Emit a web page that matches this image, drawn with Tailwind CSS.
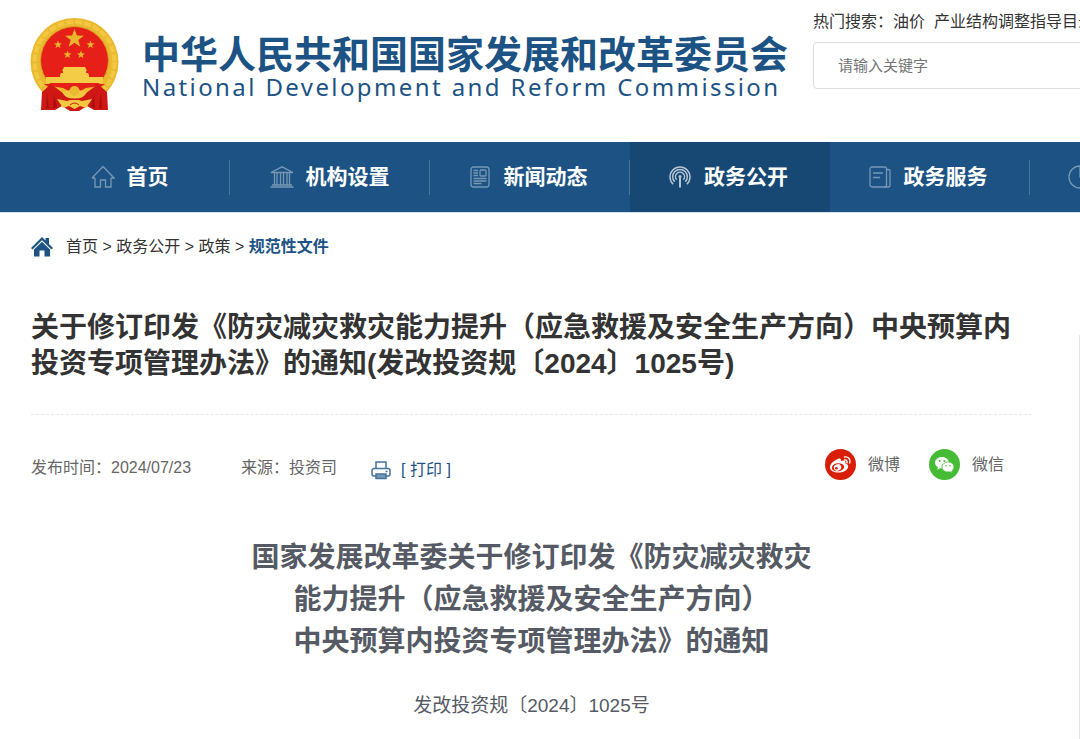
<!DOCTYPE html>
<html lang="zh-CN">
<head>
  <meta charset="UTF-8">
  <meta name="viewport" content="width=device-width,initial-scale=1">
  <title>中华人民共和国国家发展和改革委员会</title>
  <script src="https://cdn.jsdelivr.net/npm/@tailwindcss/browser@4"></script>
</head>
<body class="bg-white text-[#333] text-[16px] leading-6 overflow-x-hidden font-['Liberation_Sans','Noto_Sans_CJK_SC',sans-serif]">

  <!-- header -->
  <header class="flex h-[142px] pl-[30px] overflow-hidden">
    <svg class="mt-[17px] w-[90px] h-[95px] shrink-0" viewBox="0 0 90 95" role="img" aria-label="国徽">
      <circle cx="44.500" cy="45" r="44" fill="#e9b92f"/>
      <circle cx="44.500" cy="45" r="40" fill="none" stroke="#f3c840" stroke-width="4" stroke-dasharray="7 2"/>
      <circle cx="44.500" cy="43.500" r="34" fill="#e62018" stroke="#d9a322" stroke-width="1"/>
      <g fill="#e8b52c">
        <path d="M44.500 12l2.400 6.600 7 .2-5.600 4.300 2 6.700-5.800-4-5.800 4 2-6.700-5.600-4.300 7-.2z"/>
        <path d="M28 23.500l1 2.800 3 .1-2.400 1.800.9 2.900-2.500-1.700-2.500 1.700.9-2.900-2.400-1.800 3-.1z"/>
        <path d="M60.500 23.500l1 2.800 3 .1-2.400 1.800.9 2.900-2.500-1.700-2.500 1.700.9-2.900-2.400-1.800 3-.1z"/>
        <path d="M37.500 33.500l1 2.800 3 .1-2.400 1.800.9 2.900-2.500-1.700-2.500 1.700.9-2.900-2.400-1.800 3-.1z"/>
        <path d="M51 33.500l1 2.800 3 .1-2.400 1.800.9 2.900-2.500-1.700-2.500 1.700.9-2.900-2.400-1.800 3-.1z"/>
      </g>
      <path fill="#f5cc45" d="M34 50h21l2 4h-1v2h2l1 2H30l1-2h2v-2h-1zM30 58h29v2h14v6H16v-6h14z"/>
      <path fill="#e62018" d="M14 67h61l-9 6H23z"/>
      <path fill="#eebb2c" d="M20 69l13 2 6 3 5.500-5 5.500 5 6-3 13-2-9 9H29z"/>
      <path fill="#cf1714" d="M12 75l9-8 13 10 10 4 11-4 13-10 9 8 1 18H64l-7-4-8 5h-9l-8-5-7 4H11z"/>
      <path fill="#a90f10" d="M17 76l2 15-3 1zM24 77l3 13-4 1zM71 76l-2 15 3 1zM64 77l-3 13 4 1z"/>
      <path fill="#f3c840" d="M33 75a11.500 7 0 0 0 23 0l-5-1-6.500-4-6.500 4z"/>
      <circle cx="44.500" cy="74" r="5" fill="#e9b92f"/>
      <path fill="#f3c840" d="M27 82l10 2 3-1h9l3 1 10-2-6 9-6-2-5.500 3-5.500-3-6 2z"/>
      <path fill="none" stroke="#cf1714" d="M27 79l11 3h13l11-3M40 88q4.500-4 9 0"/>
    </svg>
    <h1 class="ml-[22px] mt-[33px] shrink-0 text-[#1c5384] whitespace-nowrap">
      <span class="block text-[38px] leading-[44px] font-bold">中华人民共和国国家发展和改革委员会</span>
      <span lang="en" class="block text-[24px] leading-5 font-['Noto_Sans',sans-serif] tracking-widest">National Development and Reform Commission</span>
    </h1>
    <form class="ml-[25px] mt-[10px] min-w-[330px] flex-1">
      <p class="whitespace-nowrap">热门搜索：<a href="#">油价</a>&nbsp; <a href="#">产业结构调整指导目录</a></p>
      <input type="text" aria-label="搜索" placeholder="请输入关键字" class="mt-2 h-[47px] w-full rounded border border-[#ddd] px-6 text-[15px] placeholder-[#757575]">
    </form>
  </header>

  <!-- main nav -->
  <nav class="h-[71px] border-b border-[#d5e0ea] bg-[#1c5384] pl-[30px] overflow-hidden">
    <ul class="flex text-[21px] font-bold text-white">
      <li class="flex w-[200px] h-[70px] shrink-0 items-center">
        <a href="#" class="flex h-[35px] flex-1 items-center justify-center gap-3 border-r border-[#497599]">
          <svg class="size-6" viewBox="0 0 24 24" fill="none" stroke="#7798b5" stroke-width="1.300"><path d="M1 13L12 1.500 23 13h-3M1 13h3M4 13v9h5.500v-7h5v7H20v-9"/></svg>
          首页
        </a>
      </li>
      <li class="flex w-[200px] h-[70px] shrink-0 items-center">
        <a href="#" class="flex h-[35px] flex-1 items-center justify-center gap-3 border-r border-[#497599]">
          <svg class="size-6" viewBox="0 0 24 24" fill="none" stroke="#7798b5" stroke-width="1.300"><path d="M.5 22h23M2 20h20M1 7.500L12 1.800l11 5.700zM4.500 8v12M7 8v12M10.500 8v12M13.500 8v12M17 8v12M19.500 8v12"/></svg>
          机构设置
        </a>
      </li>
      <li class="flex w-[200px] h-[70px] shrink-0 items-center">
        <a href="#" class="flex h-[35px] flex-1 items-center justify-center gap-3 border-r border-[#497599] pr-1">
          <svg class="size-6" viewBox="0 0 24 24" fill="none" stroke="#7798b5" stroke-width="1.300"><rect x="3" y="2" width="18" height="20" rx="2.500"/><rect x="12" y="5" width="6" height="6" rx="1"/><path d="M5.500 5.500H10M5.500 8H10M5.500 10.500H10M5.500 13.500h13M5.500 16h13M5.500 18.500h8"/></svg>
          新闻动态
        </a>
      </li>
      <li class="flex w-[200px] h-[70px] shrink-0 items-center bg-[#164873]">
        <a href="#" class="flex h-[35px] flex-1 items-center justify-center gap-3 pr-1">
          <svg class="size-6" viewBox="0 0 24 24" fill="none" stroke="#b3c4d4" stroke-width="1.500"><path d="M5.200 19.300a10 10 0 1 1 13.600 0M6.700 16.800a7.300 7.300 0 1 1 10.600 0M8.700 14.800a4.500 4.500 0 1 1 6.600 0"/><path stroke-width="2" d="M12 12v10.500"/><circle cx="12" cy="11.500" r="1.500" fill="#b3c4d4" stroke="none"/></svg>
          政务公开
        </a>
      </li>
      <li class="flex w-[200px] h-[70px] shrink-0 items-center">
        <a href="#" class="flex h-[35px] flex-1 items-center justify-center gap-3 border-r border-[#497599] pr-1">
          <svg class="size-6" viewBox="0 0 24 24" fill="none" stroke="#7798b5" stroke-width="1.300"><rect x="2" y="2" width="16.500" height="20" rx="2"/><path d="M5 8h10M5 12.500h7M18.500 4.500h2a1.500 1.500 0 0 1 1.500 1.500v14a2 2 0 0 1-2 2h-4"/></svg>
          政务服务
        </a>
      </li>
      <li class="flex w-[200px] h-[70px] shrink-0 items-center">
        <a href="#" class="flex h-[35px] flex-1 items-center justify-center gap-3 pr-1">
          <svg class="size-6" viewBox="0 0 24 24" fill="none" stroke="#7798b5" stroke-width="1.300"><circle cx="12" cy="12" r="11"/><path d="M12 1v11h11"/></svg>
          发改数据
        </a>
      </li>
    </ul>
  </nav>

  <!-- breadcrumb -->
  <div class="mt-[22px] flex items-center pl-[30px]">
    <svg class="mr-3 size-6" viewBox="0 0 24 24" fill="#1c5384"><path d="M12 2l3.500 3.500V3H19v6l4 4-1.500 1.500L12 5.200l-9.500 9.300L1 13z"/><path d="M12 6.800l8 7.800V21.500h-5.500v-6h-5v6H4v-6.900z"/></svg>
    <p><a href="#">首页</a> &gt; <a href="#">政务公开</a> &gt; <a href="#">政策</a> &gt; <a href="#" class="font-bold text-[#1c5384]">规范性文件</a></p>
  </div>

  <main class="flex">
    <article class="flex-1 pl-[31px] pr-[47px] pb-10">
      <h2 class="mt-[51px] text-[28px] leading-9 font-bold">关于修订印发《防灾减灾救灾能力提升（应急救援及安全生产方向）中央预算内投资专项管理办法》的通知(发改投资规〔2024〕1025号)</h2>

      <div class="mt-8 flex items-start border-t border-dashed border-[#e8e8e8] pt-[34px] text-[#666]">
        <span class="mt-[7px]">发布时间：2024/07/23</span>
        <span class="mt-[7px] ml-[50px]">来源：投资司</span>
        <button type="button" class="ml-8 mt-[9px] flex items-center gap-2 text-[#1c5384]">
          <svg class="size-6" viewBox="0 0 24 24" fill="none" stroke="#44739b" stroke-width="1.500"><path d="M7 10.500V4h10v6.500M7 18H5a2 2 0 0 1-2-2v-3.500a2 2 0 0 1 2-2h14a2 2 0 0 1 2 2V16a2 2 0 0 1-2 2h-2"/><path d="M7 16h10v4.500H7z" fill="#7798b5"/><path d="M16.500 13.500h2"/></svg>
          <span>[ 打印 ]</span>
        </button>
        <div class="ml-auto mr-7 flex gap-[29px]">
          <a href="#" class="flex items-center gap-3">
            <svg class="size-[31px]" viewBox="0 0 31 31"><circle cx="15.500" cy="15.500" r="15.500" fill="#d81e06"/><path fill="#fff" d="M13 10c2-1 3.500-.2 2.800 2 3-1.200 5.500-.3 4.500 2.200 6 2.300 2 9.300-6.800 9.300C3.500 23.500 3 16.500 8.500 12.500 10 11.300 11.500 10.500 13 10z"/><ellipse cx="13" cy="18.300" rx="6.200" ry="4" fill="#d81e06" transform="rotate(-8 13 18.300)"/><ellipse cx="12.500" cy="18.500" rx="3.800" ry="3.200" fill="#fff" transform="rotate(-20 12.500 18.500)"/><circle cx="11.500" cy="19.300" r="1.300" fill="#d81e06"/><path fill="none" stroke="#fff" stroke-width="1.400" stroke-linecap="round" d="M19.500 11c2-.3 3 1 2.500 2.800M19.500 8c4-.6 6.500 2.500 5.300 6"/></svg>
            微博
          </a>
          <a href="#" class="flex items-center gap-3">
            <svg class="size-[31px]" viewBox="0 0 31 31"><circle cx="15.500" cy="15.500" r="15.500" fill="#46bb36"/><path fill="#fff" d="M13 8c4 0 7 2.500 7 5.500S17 19.500 13 19.500l-2-.3-2.800 1.500.7-2.400C7.200 17.200 6 15.500 6 13.500 6 10.500 9 8 13 8z"/><path fill="#fff" stroke="#46bb36" stroke-width=".8" d="M19 13c3.500 0 6 2.200 6 5 0 1.700-.9 3-2.300 4l.5 2-2.300-1.200-1.900.2c-3.500 0-6-2.200-6-5s2.500-5 6-5z"/><g fill="#46bb36"><circle cx="10.700" cy="12" r="1"/><circle cx="15.300" cy="12" r="1"/><circle cx="17" cy="16.800" r=".8"/><circle cx="21" cy="16.800" r=".8"/></g></svg>
            微信
          </a>
        </div>
      </div>

      <h3 class="mt-[55px] text-center text-[28px] leading-[42px] font-bold text-[#555a64]">国家发展改革委关于修订印发《防灾减灾救灾<br>能力提升（应急救援及安全生产方向）<br>中央预算内投资专项管理办法》的通知</h3>
      <p class="mt-[30px] text-center text-[19px] leading-[26px] text-[#555a64]">发改投资规〔2024〕1025号</p>
    </article>
    <!-- edge of the side column -->
    <aside class="mt-[76px] w-px bg-[#e5e5e5]"></aside>
  </main>

</body>
</html>
